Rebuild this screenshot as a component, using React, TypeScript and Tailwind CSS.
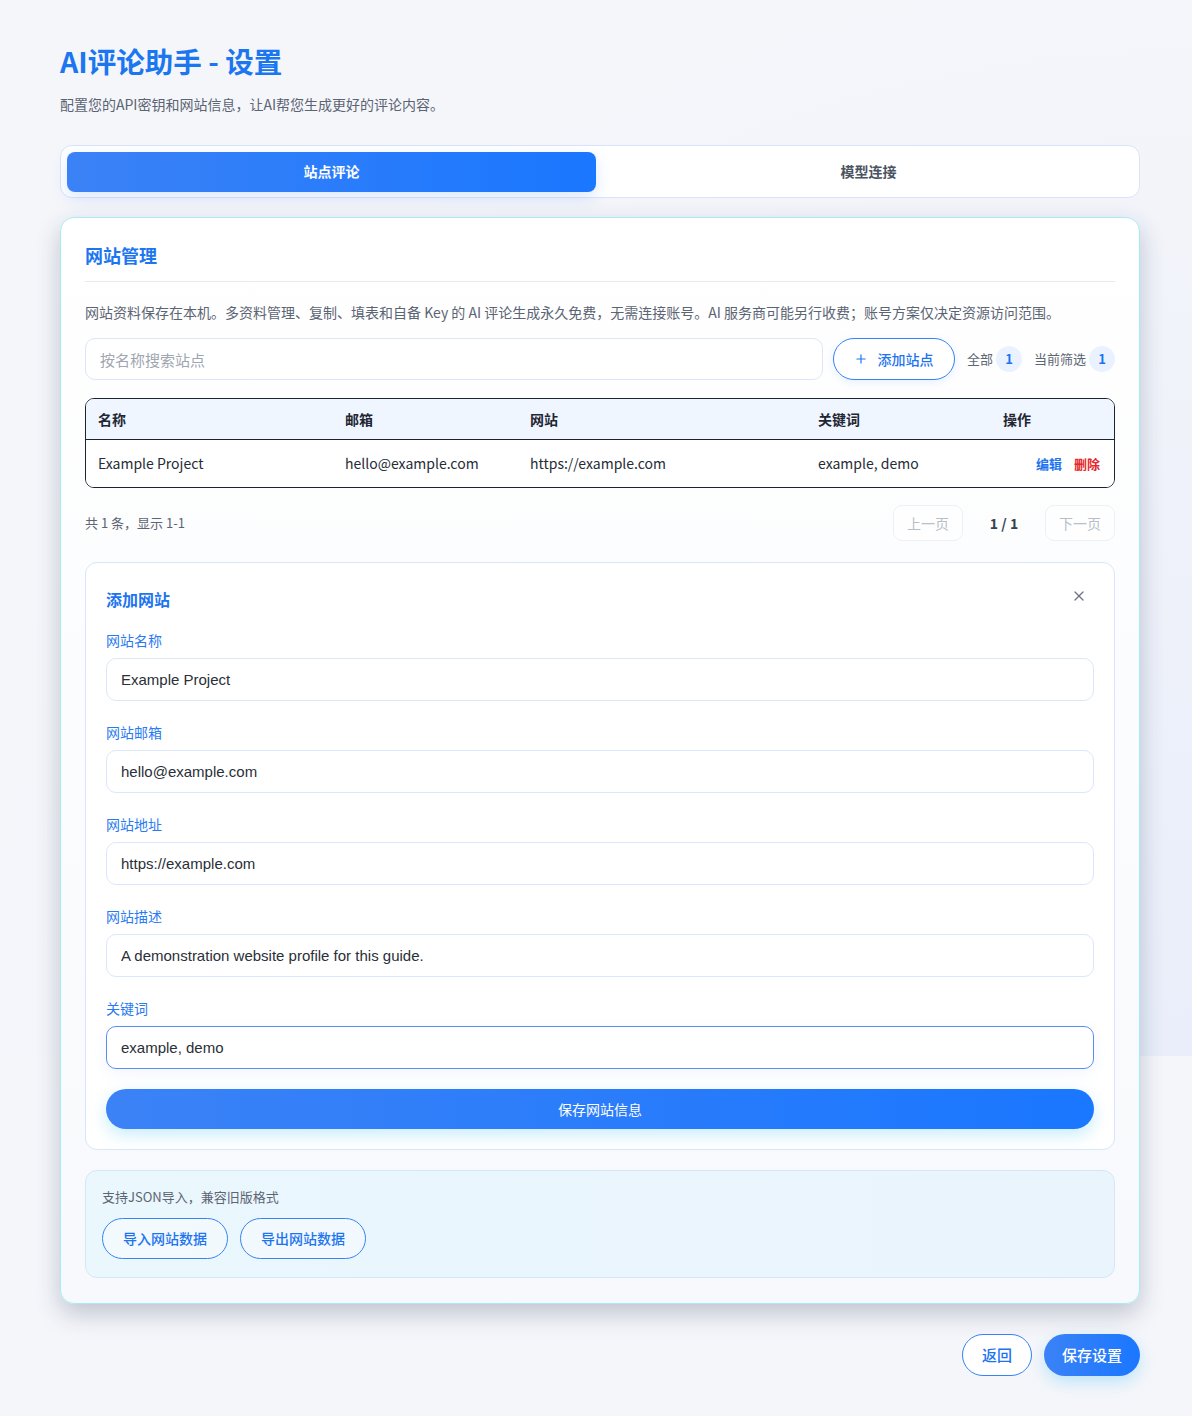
import { Plus, X } from "lucide-react";

const cjk = "font-['Noto_Sans_CJK_SC','Noto_Sans',sans-serif]";
const inputFont = "font-['Liberation_Sans','Noto_Sans_CJK_SC',sans-serif]";

const fields = [
  { label: "网站名称", value: "Example Project" },
  { label: "网站邮箱", value: "hello@example.com" },
  { label: "网站地址", value: "https://example.com" },
  { label: "网站描述", value: "A demonstration website profile for this guide." },
  { label: "关键词", value: "example, demo", focused: true },
];

function Badge({ n }: { n: number }) {
  return (
    <span className="ml-[3px] flex h-[26px] w-[26px] items-center justify-center rounded-full bg-[#eaf2ff] text-[13px] font-bold text-[#1d74f0]">
      {n}
    </span>
  );
}

function SiteTable() {
  const cols = "grid grid-cols-[247px_185px_288px_185px_1fr] pl-[12px] pr-[13px]";
  return (
    <div className="mt-[18px] overflow-hidden rounded-[9px] border border-[#1c2433]">
      <div className={`${cols} h-[41px] items-center border-b border-[#1c2433] bg-[#f0f6ff] text-[14px] font-bold text-[#1f2733]`}>
        <span>名称</span>
        <span>邮箱</span>
        <span>网站</span>
        <span>关键词</span>
        <span>操作</span>
      </div>
      <div className={`${cols} h-[47px] items-center bg-white text-[14px] text-[#262c36]`}>
        <span>Example Project</span>
        <span>hello@example.com</span>
        <span>https://example.com</span>
        <span>example, demo</span>
        <span className="flex justify-end gap-3 pr-[1px] text-[13px] font-bold">
          <span className="text-[#1d74f0]">编辑</span>
          <span className="text-[#e5262b]">删除</span>
        </span>
      </div>
    </div>
  );
}

function Pagination() {
  return (
    <div className="mt-[17px] flex items-center justify-between">
      <span className="text-[13px] text-[#5d6573]">共 1 条，显示 1-1</span>
      <div className="flex items-center">
        <button className="h-[36px] w-[70px] rounded-[9px] border border-[#edf0f6] bg-white/60 text-[14px] text-[#b9bec8]">
          上一页
        </button>
        <span className="w-[82px] text-center text-[14px] font-bold text-[#3a414d]">1 / 1</span>
        <button className="h-[36px] w-[70px] rounded-[9px] border border-[#edf0f6] bg-white/60 text-[14px] text-[#b9bec8]">
          下一页
        </button>
      </div>
    </div>
  );
}

function AddSiteForm() {
  return (
    <div className="mt-[21px] rounded-[12px] border border-[#d9e5fb] bg-white px-[20px] pb-[20px] pt-[23px]">
      <div className="flex items-center justify-between">
        <h3 className="text-[16px] font-bold leading-[26px] text-[#1d74f0]">添加网站</h3>
        <X size={16} strokeWidth={1.8} className="mr-[7px] -mt-[6px] text-[#6b7280]" />
      </div>
      <div className="mt-[18px] flex flex-col gap-[21px]">
        {fields.map((f) => (
          <div key={f.label}>
            <label className="block text-[14px] leading-[20px] text-[#2a7bf0]">{f.label}</label>
            <input
              readOnly
              value={f.value}
              className={`${inputFont} mt-[8px] h-[43px] w-full rounded-[10px] border bg-white px-[14px] text-[15px] text-[#2a2f38] outline-none ${
                f.focused
                  ? "border-[#5b8fee] shadow-[0_4px_14px_rgba(59,130,246,0.08)]"
                  : "border-[#dce7fb]"
              }`}
            />
          </div>
        ))}
      </div>
      <button className="mt-[20px] h-[40px] w-full rounded-full bg-[linear-gradient(90deg,#3b82f6,#1a77ff)] text-[14px] text-white shadow-[0_6px_16px_rgba(56,189,248,0.28)]">
        保存网站信息
      </button>
    </div>
  );
}

function ImportBox() {
  return (
    <div className="mt-[20px] rounded-[12px] border border-[#d6e6fa] bg-[linear-gradient(90deg,#eaf7fd,#eaf4fd)] px-[16px] pb-[18px] pt-[16px]">
      <p className="text-[13px] leading-[20px] text-[#5d6573]">支持JSON导入，兼容旧版格式</p>
      <div className="mt-[11px] flex gap-3">
        <button className="h-[41px] w-[126px] rounded-full border border-[#3583f5] bg-white/40 text-[14px] font-medium text-[#1d74f0]">
          导入网站数据
        </button>
        <button className="h-[41px] w-[126px] rounded-full border border-[#3583f5] bg-white/40 text-[14px] font-medium text-[#1d74f0]">
          导出网站数据
        </button>
      </div>
    </div>
  );
}

export default function App() {
  return (
    <div
      className={`${cjk} min-h-screen [background:radial-gradient(ellipse_at_100%_100%,#e9eefa_0%,rgba(245,246,250,0)_75%)_0_0/100%_1056px_no-repeat,#f5f6fa] px-[60px] pb-[36px] pt-[43px]`}
    >
      <div className="w-[1080px]">
        <h1 className="text-[28.5px] font-bold leading-[36px] text-[#1b76f0]">AI评论助手 - 设置</h1>
        <p className="mt-[15px] text-[14px] leading-[20px] text-[#5b6473]">
          配置您的API密钥和网站信息，让AI帮您生成更好的评论内容。
        </p>

        <div className="mt-[31px] flex h-[53px] items-center gap-2 rounded-[12px] border border-[#d9e4fb] bg-white px-[6px]">
          <button className="h-[40px] flex-1 rounded-[8px] bg-[linear-gradient(90deg,#3b82f6,#1a77ff)] text-[14px] font-bold text-white shadow-[0_6px_16px_rgba(59,130,246,0.18)]">
            站点评论
          </button>
          <button className="h-[40px] flex-1 rounded-[8px] text-[14px] font-bold text-[#4b5361]">模型连接</button>
        </div>

        <div className="mt-[19px] rounded-[14px] border border-[#a6ebf8] bg-[linear-gradient(180deg,#ffffff,#f7f9fc)] px-[24px] pb-[25px] pt-[24px] shadow-[0_10px_24px_rgba(20,40,70,0.24)]">
          <h2 className="border-b border-[#e5e9f0] pb-[13px] text-[18px] font-bold leading-[26px] text-[#1b76f0]">
            网站管理
          </h2>
          <p className="mt-[19px] text-[14px] leading-[22px] text-[#5b6473]">
            网站资料保存在本机。多资料管理、复制、填表和自备 Key 的 AI 评论生成永久免费，无需连接账号。AI 服务商可能另行收费；账号方案仅决定资源访问范围。
          </p>

          <div className="mt-[15px] flex items-center">
            <input
              readOnly
              placeholder="按名称搜索站点"
              className="h-[42px] flex-1 rounded-[10px] border border-[#dce6f8] bg-white px-[14px] text-[15px] outline-none placeholder:text-[#a0a6b1]"
            />
            <button className="ml-[10px] flex h-[42px] w-[122px] items-center justify-center gap-[9px] rounded-full border border-[#3583f5] bg-white text-[14px] font-medium text-[#1d74f0] shadow-[0_2px_8px_rgba(59,130,246,0.12)]">
              <Plus size={14} strokeWidth={2} />
              添加站点
            </button>
            <span className="ml-[12px] text-[13px] text-[#5d6573]">全部</span>
            <Badge n={1} />
            <span className="ml-[12px] text-[13px] text-[#5d6573]">当前筛选</span>
            <Badge n={1} />
          </div>

          <SiteTable />
          <Pagination />
          <AddSiteForm />
          <ImportBox />
        </div>

        <div className="mt-[30px] flex justify-end gap-3">
          <button className="h-[42px] w-[70px] rounded-full border border-[#3583f5] bg-white text-[15px] font-medium text-[#1d74f0]">
            返回
          </button>
          <button className="h-[42px] w-[96px] rounded-full bg-[linear-gradient(90deg,#3b82f6,#1a77ff)] text-[15px] font-medium text-white shadow-[0_6px_16px_rgba(56,189,248,0.3)]">
            保存设置
          </button>
        </div>
      </div>
    </div>
  );
}
